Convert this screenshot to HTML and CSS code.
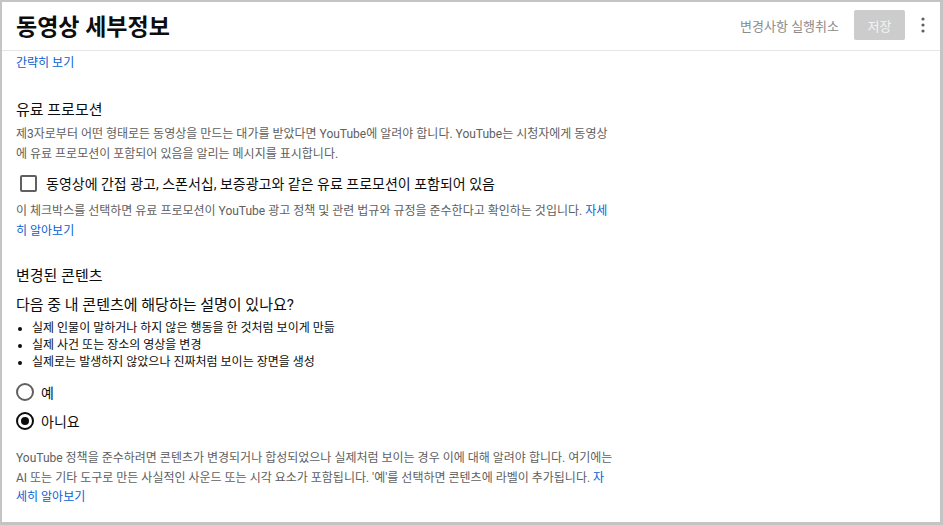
FILE: index.html
```html
<!DOCTYPE html>
<html lang="ko">
<head>
    <meta charset="UTF-8">
    <title>동영상 세부정보</title>
    <link rel="stylesheet" href="styles.css">
</head>
<body>
<div class="frame">
    <header class="topbar">
        <h1 class="page-title">동영상 세부정보</h1>
        <div class="actions">
            <span class="undo">변경사항 실행취소</span>
            <button class="save" disabled>저장</button>
            <span class="kebab">
                <svg width="4" height="16" viewBox="0 0 4 16"><circle cx="2" cy="2" r="1.6"/><circle cx="2" cy="8" r="1.6"/><circle cx="2" cy="14" r="1.6"/></svg>
            </span>
        </div>
    </header>

    <main class="content">
        <a class="link less" href="#">간략히 보기</a>

        <section class="block promo">
            <h2 class="section-title">유료 프로모션</h2>
            <p class="desc">제3자로부터 어떤 형태로든 동영상을 만드는 대가를 받았다면 YouTube에 알려야 합니다. YouTube는 시청자에게 동영상<br>에 유료 프로모션이 포함되어 있음을 알리는 메시지를 표시합니다.</p>
            <label class="check-row">
                <span class="checkbox"></span>
                <span>동영상에 간접 광고, 스폰서십, 보증광고와 같은 유료 프로모션이 포함되어 있음</span>
            </label>
            <p class="desc">이 체크박스를 선택하면 유료 프로모션이 YouTube 광고 정책 및 관련 법규와 규정을 준수한다고 확인하는 것입니다. <a class="link" href="#">자세<br>히 알아보기</a></p>
        </section>

        <section class="block altered">
            <h2 class="section-title">변경된 콘텐츠</h2>
            <p class="question">다음 중 내 콘텐츠에 해당하는 설명이 있나요?</p>
            <ul class="bullets">
                <li>실제 인물이 말하거나 하지 않은 행동을 한 것처럼 보이게 만듦</li>
                <li>실제 사건 또는 장소의 영상을 변경</li>
                <li>실제로는 발생하지 않았으나 진짜처럼 보이는 장면을 생성</li>
            </ul>
            <div class="radios">
                <label class="radio-row"><span class="radio"></span><span>예</span></label>
                <label class="radio-row"><span class="radio on"></span><span>아니요</span></label>
            </div>
            <p class="desc">YouTube 정책을 준수하려면 콘텐츠가 변경되거나 합성되었으나 실제처럼 보이는 경우 이에 대해 알려야 합니다. 여기에는<br>AI 또는 기타 도구로 만든 사실적인 사운드 또는 시각 요소가 포함됩니다. '예'를 선택하면 콘텐츠에 라벨이 추가됩니다. <a class="link" href="#">자<br>세히 알아보기</a></p>
        </section>
    </main>
</div>
</body>
</html>
```

FILE: styles.css
```css
* {
  box-sizing: border-box;
}
body {
  margin: 0;
  font-family: Roboto, "Noto Sans CJK KR", sans-serif;
  color: #0d0d0d;
  background: #fff;
}
.frame {
  width: 943px;
  height: 525px;
  border-style: solid;
  border-color: #c4c4c4;
  border-width: 2px 3px 3px 2px;
  overflow: hidden;
}
.topbar {
  height: 49px;
  border-bottom: 1px solid #e6e6e6;
  display: flex;
  align-items: center;
  justify-content: space-between;
  padding: 0 14px;
}
.page-title {
  margin: 0 0 2px;
  font-size: 23px;
  font-weight: 700;
}
.actions {
  display: flex;
  align-items: center;
  margin-top: -2px;
}
.undo {
  font-size: 13px;
  color: #8c8c8c;
  margin-right: 15px;
}
.save {
  width: 51px;
  height: 30px;
  border: 0;
  border-radius: 2px;
  background: #cccccc;
  color: #f4f4f4;
  font-family: inherit;
  font-size: 13px;
  padding: 0;
}
.kebab {
  display: flex;
  margin-left: 16px;
  margin-right: 1px;
  fill: #606060;
}
.content {
  padding: 3px 14px 0;
  width: 660px;
}
.link {
  color: #065fd4;
  text-decoration: none;
}
.less {
  display: block;
  font-size: 12px;
  line-height: 18px;
}
.block {
  margin-top: 28px;
}
.altered {
  margin-top: 25px;
}
.section-title {
  margin: 0;
  font-size: 15px;
  font-weight: 400;
  line-height: 20px;
}
.desc {
  margin: 0;
  font-size: 12px;
  line-height: 19.5px;
  color: #606060;
}
.promo .section-title {
  margin-bottom: 5px;
}
.check-row {
  display: flex;
  align-items: center;
  font-size: 14px;
  height: 38px;
  padding-left: 4px;
}
.checkbox {
  width: 17px;
  height: 17px;
  border: 2px solid #606060;
  border-radius: 2px;
  margin-right: 9px;
}
.question {
  margin: 9px 0 0;
  font-size: 15px;
  line-height: 20px;
}
.bullets {
  margin: 5px 0 0;
  padding-left: 16px;
  font-size: 12px;
  line-height: 17px;
}
.radios {
  margin-top: 6px;
  margin-bottom: 14px;
}
.radio-row {
  display: flex;
  align-items: center;
  height: 29px;
  font-size: 14px;
}
.radio {
  width: 18px;
  height: 18px;
  border: 2px solid #606060;
  border-radius: 50%;
  margin-right: 7px;
  display: flex;
  align-items: center;
  justify-content: center;
}
.radio.on {
  border-color: #0d0d0d;
}
.radio.on::after {
  content: "";
  width: 8px;
  height: 8px;
  border-radius: 50%;
  background: #0d0d0d;
}
```
